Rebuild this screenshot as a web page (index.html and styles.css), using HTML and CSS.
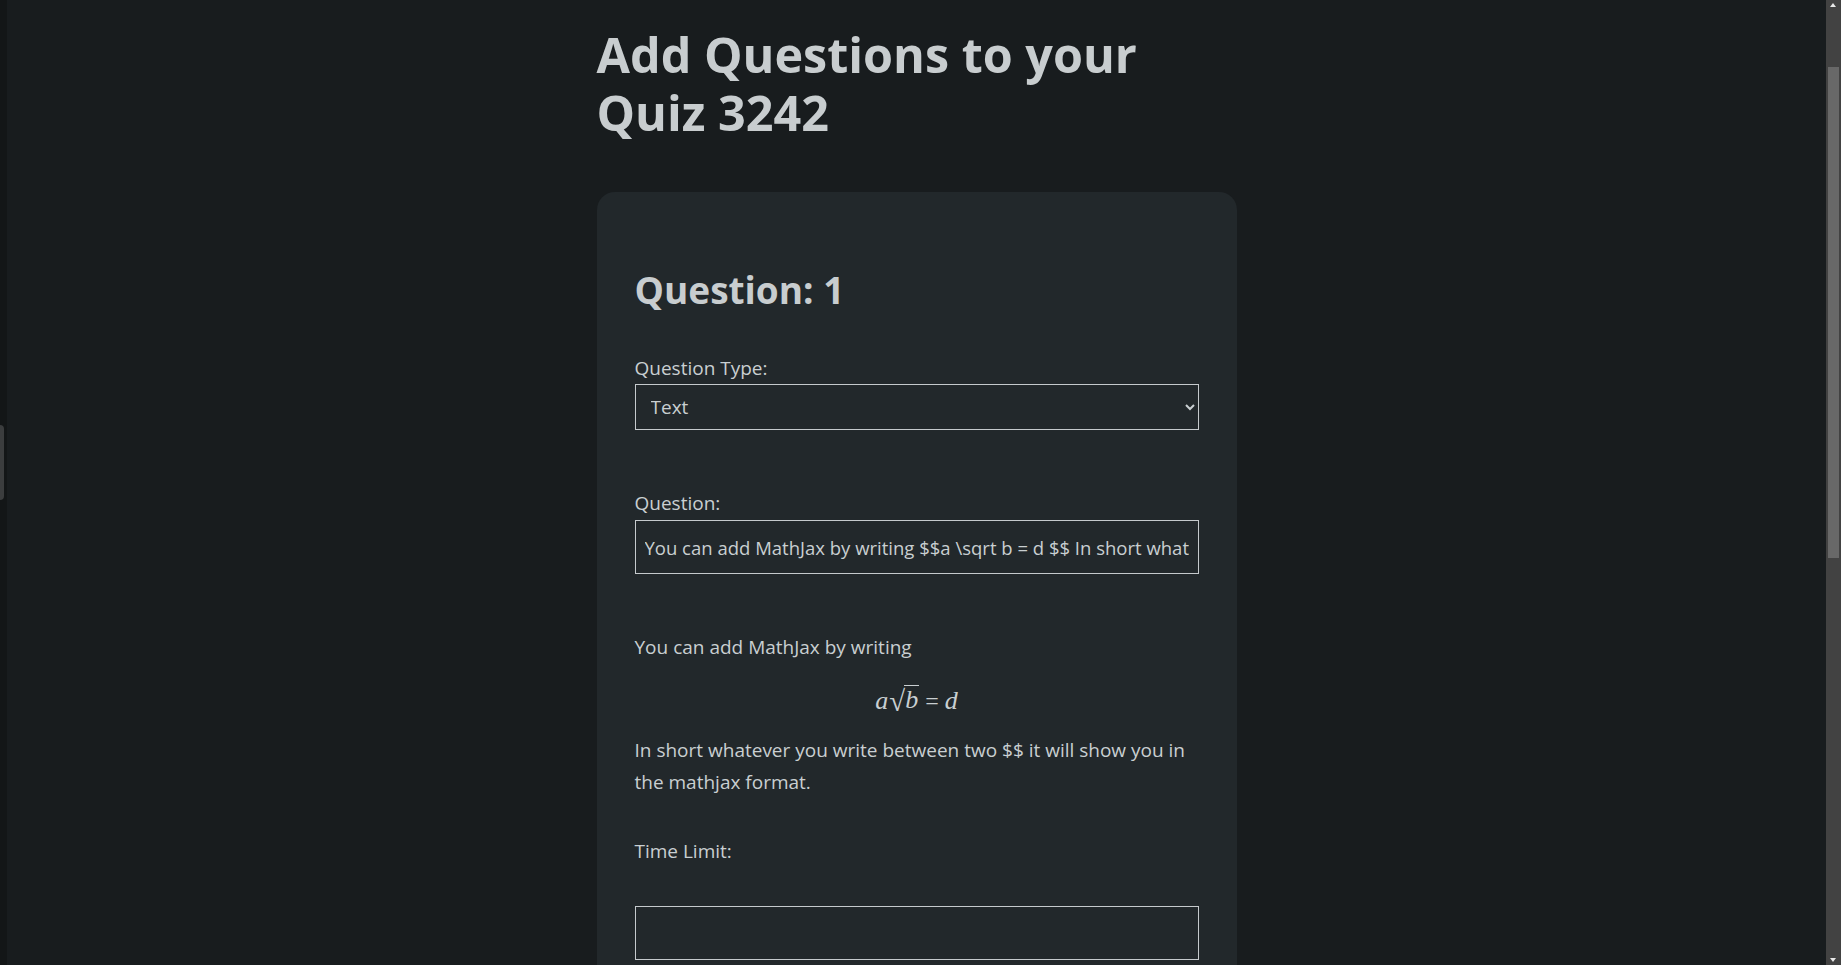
FILE: index.html
```html
<!DOCTYPE html>
<html lang="en">
<head>
<meta charset="utf-8">
<title>Add Questions</title>
<link rel="stylesheet" href="styles.css">
</head>
<body>
  <aside class="side-strip"><span class="side-tab"></span></aside>
  <main class="main">
    <div class="container">
      <h1 class="page-title">Add Questions to your Quiz 3242</h1>
      <form class="card">
        <h2 class="q-title">Question: 1</h2>

        <div class="field">
          <label class="label" for="qtype">Question Type:</label>
          <select id="qtype" class="control select">
            <option>Text</option>
            <option>Multiple Choice</option>
          </select>
        </div>

        <div class="field field-question">
          <label class="label" for="qtext">Question:</label>
          <input id="qtext" class="control input" type="text" value="You can add MathJax by writing $$a \sqrt b = d $$ In short whatever you write between two $$ it will show you in the mathjax format.">
        </div>

        <div class="preview">
          <p class="para">You can add MathJax by writing</p>
          <div class="math">
            <span class="mi">a</span><span class="sqrt"><span class="radical">√</span><span class="radicand"><span class="mi">b</span></span></span><span class="mo">=</span><span class="mi">d</span>
          </div>
          <p class="para">In short whatever you write between two $$ it will show you in the mathjax format.</p>
        </div>

        <div class="field field-time">
          <label class="label" for="qtime">Time Limit:</label>
          <input id="qtime" class="control input" type="text">
        </div>
      </form>
    </div>
  </main>
  <div class="scrollbar" aria-hidden="true">
    <span class="sb-arrow sb-up"></span>
    <span class="sb-thumb"></span>
    <span class="sb-arrow sb-down"></span>
  </div>
</body>
</html>
```

FILE: styles.css
```css
html {
  color-scheme: dark;
}

* {
  box-sizing: border-box;
}

body {
  margin: 0;
  padding-right: 15px;
  background: #181c1e;
  color: #c9cfd1;
  font-family: "Open Sans", "Noto Sans", "DejaVu Sans", sans-serif;
  display: flex;
  min-height: 100vh;
}

.side-strip {
  flex: 0 0 7px;
  background: #131617;
  position: sticky;
  top: 0;
  height: 100vh;
  display: flex;
  align-items: center;
}

.side-tab {
  display: block;
  width: 4px;
  height: 75px;
  margin-top: -41px;
  background: #3b3d3e;
  border-radius: 0 4px 4px 0;
}

.main {
  flex: 1;
  display: flex;
  justify-content: center;
}

.container {
  width: 640px;
}

.page-title {
  margin: 25px 0 51px;
  font-size: 48.5px;
  line-height: 58px;
  font-weight: 700;
  color: #c8cdcf;
}

.card {
  background: #22282b;
  border-radius: 18px;
  padding: 74px 38px 60px;
}

.q-title {
  margin: 0 0 41px;
  font-size: 37px;
  line-height: 48px;
  font-weight: 700;
  color: #c8cdcf;
}

.field {
  display: flex;
  flex-direction: column;
  gap: 2px;
}

.label {
  font-size: 19px;
  line-height: 27px;
}

.control {
  width: 100%;
  background: transparent;
  border: 1px solid #c5cacc;
  border-radius: 0;
  color: #c9cfd1;
  font-family: inherit;
  font-size: 18.5px;
  outline: none;
}

.select {
  height: 46px;
  padding: 0 8px 0 11px;
  font-size: 19px;
}

.select option {
  background: #22282b;
}

.input {
  height: 54px;
  padding: 0 9px;
}

.field-question {
  margin-top: 60px;
  gap: 3px;
}

.preview {
  margin-top: 57px;
}

.para {
  margin: 0;
  font-size: 19px;
  line-height: 32px;
}

.math {
  text-align: center;
  margin: 18px 0 13px;
  font-family: "Liberation Serif", "Times New Roman", serif;
  font-size: 26px;
  line-height: 40px;
  color: #c9cfd1;
}

.mi {
  font-style: italic;
}

.sqrt {
  display: inline-flex;
  align-items: flex-end;
  margin-left: 1px;
}

.radical {
  font-style: normal;
  font-size: 29px;
  line-height: 1;
  position: relative;
  top: 2px;
}

.radicand {
  border-top: 1px solid #c9cfd1;
  line-height: 1.08;
  padding: 0 1px;
  margin-left: -1px;
}

.mo {
  margin: 0 6px;
  font-size: 24px;
}

.field-time {
  margin-top: 40px;
  gap: 41px;
}

.scrollbar {
  position: fixed;
  top: 0;
  right: 0;
  width: 15px;
  height: 100vh;
  background: #424242;
}

.sb-thumb {
  position: absolute;
  left: 2px;
  right: 2px;
  top: 67px;
  height: 491px;
  background: #686868;
}

.sb-arrow {
  position: absolute;
  left: 4px;
  width: 0;
  height: 0;
  border-left: 3.5px solid transparent;
  border-right: 3.5px solid transparent;
}

.sb-up {
  top: 3px;
  border-bottom: 4px solid #e8e8e8;
}

.sb-down {
  bottom: 3px;
  border-top: 4px solid #e8e8e8;
}
```
